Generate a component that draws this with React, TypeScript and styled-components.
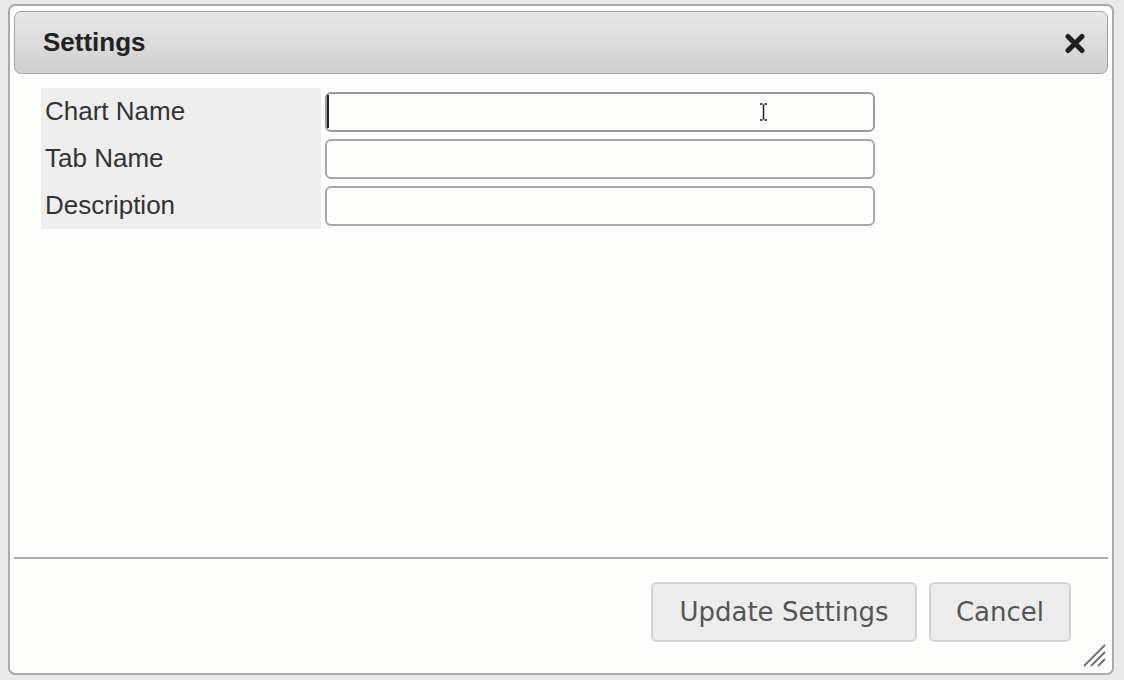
import styled, { createGlobalStyle } from "styled-components";

const GlobalStyle = createGlobalStyle`
  html, body {
    margin: 0;
    padding: 0;
    background: #e9e9e9;
  }
  #root {
    height: 680px;
  }
`;

const fields = [
  { id: "chartName", label: "Chart Name", focused: true },
  { id: "tabName", label: "Tab Name", focused: false },
  { id: "description", label: "Description", focused: false },
];

const App = () => (
  <>
    <GlobalStyle />
    <Page>
      <Dialog>
        <TitleBar>
          <Title>Settings</Title>
          <CloseButton aria-label="Close">
            <svg width="22" height="21" viewBox="0 0 22 21">
              <path
                d="M4 3.5L18 17.5M18 3.5L4 17.5"
                stroke="#1e1e1e"
                strokeWidth="5"
                strokeLinecap="round"
                fill="none"
              />
            </svg>
          </CloseButton>
        </TitleBar>

        <Content>
          <FormTable>
            {fields.map((field) => (
              <Row key={field.id}>
                <Label htmlFor={field.id}>{field.label}</Label>
                <InputCell>
                  <TextInput id={field.id} type="text" $focused={field.focused} />
                  {field.focused && <Caret />}
                  {field.focused && (
                    <MouseCursor width="9" height="18" viewBox="0 0 9 18">
                      <path
                        d="M1 1h2.5M5.5 1H8M4.5 1.5v15M1 17h2.5M5.5 17H8"
                        stroke="#111"
                        strokeWidth="1.4"
                        fill="none"
                      />
                    </MouseCursor>
                  )}
                </InputCell>
              </Row>
            ))}
          </FormTable>
        </Content>

        <Footer>
          <Button $width={266}>Update Settings</Button>
          <Button $width={142}>Cancel</Button>
        </Footer>

        <ResizeGrip width="24" height="24" viewBox="0 0 24 24">
          <path
            d="M23 2L2 23M23 9L9 23M23 16L16 23"
            stroke="#6e6e6e"
            strokeWidth="1.8"
            fill="none"
          />
        </ResizeGrip>
      </Dialog>
    </Page>
  </>
);

// Styled Components
const Page = styled.div`
  height: 680px;
  padding: 4px 10px 5px 8px;
  box-sizing: border-box;
  display: flex;
`;

const Dialog = styled.div`
  position: relative;
  flex: 1;
  display: flex;
  flex-direction: column;
  box-sizing: border-box;
  background: #fdfdfc;
  border: 2px solid #ababab;
  border-radius: 7px;
  padding: 5px 4px 0 4px;
`;

const TitleBar = styled.header`
  height: 63px;
  box-sizing: border-box;
  display: flex;
  align-items: center;
  justify-content: space-between;
  padding: 0 21px 0 28px;
  border: 1px solid #a3a3a3;
  border-radius: 7px;
  background: linear-gradient(to bottom, #e6e6e7 0%, #dcdcdc 50%, #cfcfcf 100%);
`;

const Title = styled.h2`
  margin: 0;
  font-family: "Liberation Sans", Arial, sans-serif;
  font-size: 26px;
  font-weight: bold;
  color: #222;
`;

const CloseButton = styled.button`
  display: flex;
  align-items: center;
  justify-content: center;
  padding: 0;
  margin-top: 2px;
  border: none;
  background: transparent;
  cursor: pointer;
`;

const Content = styled.div`
  flex: 1;
  padding: 14px 27px 0 27px;
`;

const FormTable = styled.div`
  display: grid;
  grid-template-columns: 280px 550px;
  column-gap: 5px;
  width: max-content;
`;

const Row = styled.div`
  display: contents;
`;

const Label = styled.label`
  height: 47px;
  display: flex;
  align-items: center;
  padding-left: 4px;
  box-sizing: border-box;
  background: #eeeeee;
  font-family: "Liberation Sans", Arial, sans-serif;
  font-size: 26px;
  color: #333;
`;

const InputCell = styled.div`
  position: relative;
  height: 47px;
  display: flex;
  align-items: flex-start;
  padding-top: 4px;
  box-sizing: border-box;
`;

const TextInput = styled.input<{ $focused: boolean }>`
  width: 550px;
  height: 40px;
  margin-left: -1px;
  box-sizing: border-box;
  border: 2px solid ${({ $focused }) => ($focused ? "#9a9a9a" : "#a8a8a8")};
  border-radius: 6px;
  background: #fdfdfc;
  font-family: "Liberation Sans", Arial, sans-serif;
  font-size: 22px;
  outline: none;
`;

const Caret = styled.span`
  position: absolute;
  left: 1px;
  top: 7px;
  width: 2px;
  height: 33px;
  background: #222;
`;

const MouseCursor = styled.svg`
  position: absolute;
  left: 433px;
  top: 15px;
`;

const Footer = styled.footer`
  height: 116px;
  box-sizing: border-box;
  border-top: 2px solid #ababab;
  display: flex;
  justify-content: flex-end;
  align-items: flex-start;
  gap: 12px;
  padding: 23px 37px 0 0;
`;

const Button = styled.button<{ $width: number }>`
  width: ${({ $width }) => $width}px;
  height: 60px;
  padding: 0;
  border: 2px solid #d2d2d2;
  border-radius: 6px;
  background: #ececec;
  font-family: "DejaVu Sans", Verdana, sans-serif;
  font-size: 26px;
  color: #555;
  cursor: pointer;
`;

const ResizeGrip = styled.svg`
  position: absolute;
  right: 6px;
  bottom: 6px;
`;

export default App;
